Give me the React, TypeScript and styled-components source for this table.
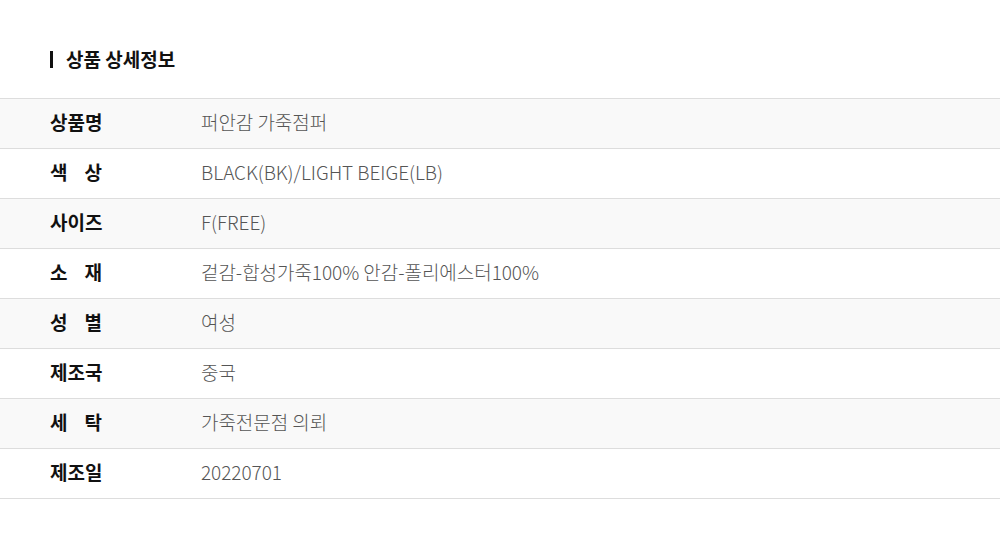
import styled, { createGlobalStyle } from "styled-components";

const GlobalStyle = createGlobalStyle`
  body {
    margin: 0;
    background: #fff;
    font-family: "Noto Sans CJK KR", "Noto Sans", sans-serif;
  }
`;

const Section = styled.section`
  width: 1000px;
  padding-top: 46px;
`;

const Title = styled.h2`
  display: flex;
  align-items: center;
  gap: 13px;
  margin: 0 0 26px 50px;
  font-size: 19px;
  font-weight: 700;
  color: #111;
  letter-spacing: 0;
  line-height: 26px;

  &::before {
    content: "";
    width: 3px;
    height: 17px;
    background: #111;
  }
`;

const Table = styled.div`
  border-top: 1px solid #ddd;
`;

const Row = styled.div<{ $shade: boolean }>`
  box-sizing: border-box;
  display: flex;
  align-items: center;
  height: 50px;
  padding-bottom: 5px;
  border-bottom: 1px solid #ddd;
  background: ${(p) => (p.$shade ? "#f9f9f9" : "#fff")};
`;

const Label = styled.div`
  width: 52px;
  margin: 0 99px 0 50px;
  font-size: 19px;
  font-weight: 700;
  color: #111;
  text-align: justify;
  text-align-last: justify;
  white-space: nowrap;
`;

const Value = styled.div`
  font-size: 19px;
  font-weight: 300;
  color: #555;
  letter-spacing: -0.05px;
`;

const rows = [
  ["상품명", "퍼안감 가죽점퍼"],
  ["색 상", "BLACK(BK)/LIGHT BEIGE(LB)"],
  ["사이즈", "F(FREE)"],
  ["소 재", "겉감-합성가죽100% 안감-폴리에스터100%"],
  ["성 별", "여성"],
  ["제조국", "중국"],
  ["세 탁", "가죽전문점 의뢰"],
  ["제조일", "20220701"],
];

export default function App() {
  return (
    <>
      <GlobalStyle />
      <Section>
        <Title>상품 상세정보</Title>
        <Table>
          {rows.map(([label, value], i) => (
            <Row key={label} $shade={i % 2 === 0}>
              <Label>{label}</Label>
              <Value>{value}</Value>
            </Row>
          ))}
        </Table>
      </Section>
    </>
  );
}
